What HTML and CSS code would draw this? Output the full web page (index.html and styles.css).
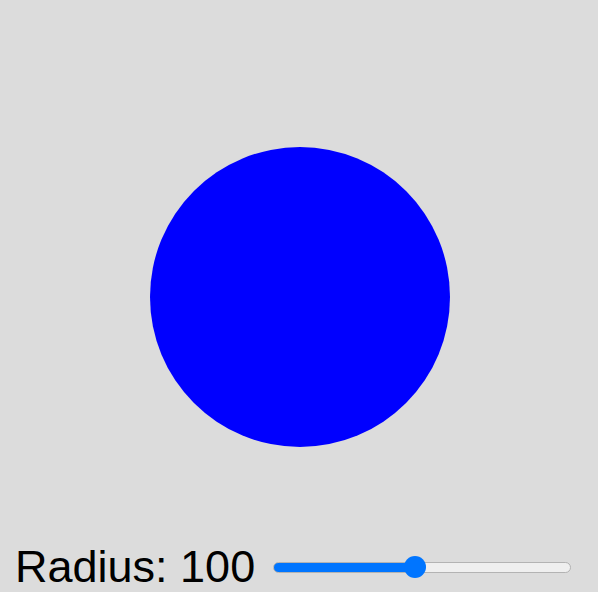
FILE: index.html
```html
<!DOCTYPE html>
<html>
<head>
<meta charset="utf-8">
<link rel="stylesheet" href="styles.css">
</head>
<body>
<div class="stage">
  <div class="circle"></div>
</div>
<div class="controls">
  <label class="label" for="radius">Radius: 100</label>
  <input id="radius" class="slider" type="range" min="10" max="200" value="100" style="--p: 142px">
</div>
</body>
</html>
```
FILE: styles.css
```css
html, body {
  margin: 0;
  padding: 0;
  background: #dcdcdc;
  overflow: hidden;
}
body {
  width: 598px;
  height: 592px;
  font-family: "Liberation Sans", Arial, sans-serif;
}
.stage {
  height: 541px;
  box-sizing: border-box;
  padding: 147px 0 0 150px;
}
.circle {
  width: 300px;
  height: 300px;
  border-radius: 50%;
  background: #0000ff;
}
.controls {
  display: flex;
  align-items: center;
  padding-left: 15px;
}
.label {
  font-size: 45px;
  color: #000;
  line-height: 52px;
}
.slider {
  -webkit-appearance: none;
  appearance: none;
  width: 298px;
  height: 22px;
  margin: 0 0 0 18px;
  padding: 0;
  background: transparent;
}
.slider::-webkit-slider-runnable-track {
  box-sizing: border-box;
  height: 11px;
  border-radius: 6px;
  border: 1px solid #b3b3b3;
  background: linear-gradient(to right, #0075ff var(--p), #efefef var(--p));
}
.slider::-webkit-slider-thumb {
  -webkit-appearance: none;
  appearance: none;
  width: 22px;
  height: 22px;
  border-radius: 50%;
  background: #0075ff;
  border: none;
  margin-top: -6.5px;
}
```
